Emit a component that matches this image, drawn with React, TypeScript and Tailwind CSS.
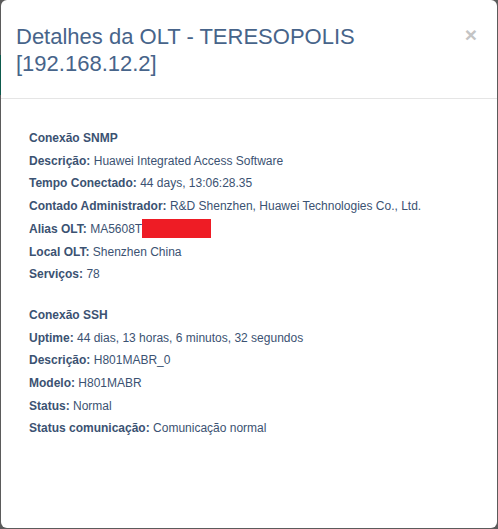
export default function App() {
  const snmp: [string, string][] = [
    ["Descrição:", "Huawei Integrated Access Software"],
    ["Tempo Conectado:", "44 days, 13:06:28.35"],
    ["Contado Administrador:", "R&D Shenzhen, Huawei Technologies Co., Ltd."],
  ];
  const snmp2: [string, string][] = [
    ["Local OLT:", "Shenzhen China"],
    ["Serviços:", "78"],
  ];
  const ssh: [string, string][] = [
    ["Uptime:", "44 dias, 13 horas, 6 minutos, 32 segundos"],
    ["Descrição:", "H801MABR_0"],
    ["Modelo:", "H801MABR"],
    ["Status:", "Normal"],
    ["Status comunicação:", "Comunicação normal"],
  ];

  return (
    <div
      className="relative h-[529px] w-[498px] overflow-hidden bg-[#5b5b5b]"
      style={{ fontFamily: "'Liberation Sans', Arial, sans-serif" }}
    >
      <div className="absolute left-0 top-[55px] h-[40px] w-[2px] bg-[#0d5a4c]" />
      <div className="absolute left-[1px] right-[1px] top-0 bottom-[1px] rounded-[6px] bg-white">
        <div className="flex items-start justify-between border-b border-[#e5e5e5] px-[15px] pt-[23px] pb-[21px]">
          <h4 className="text-[22px] leading-[27px] text-[#47648a]">
            Detalhes da OLT - TERESOPOLIS [192.168.12.2]
          </h4>
          <button className="mt-[1px] mr-[5px] text-[21px] font-bold leading-none text-[#c4c4c4]">
            ×
          </button>
        </div>
        <div className="px-[28px] pt-[28px] text-[12px] leading-[22.7px] text-[#3b5272]">
          <div className="font-bold">Conexão SNMP</div>
          {snmp.map(([k, v]) => (
            <div key={k}>
              <span className="font-bold">{k}</span> {v}
            </div>
          ))}
          <div className="relative">
            <span className="font-bold">Alias OLT:</span> MA5608T T
            <span className="absolute left-[113px] top-[1px] h-[19px] w-[69px] bg-[#ee1c25]" />
          </div>
          {snmp2.map(([k, v]) => (
            <div key={k}>
              <span className="font-bold">{k}</span> {v}
            </div>
          ))}
          <div className="mt-[18px] font-bold">Conexão SSH</div>
          {ssh.map(([k, v]) => (
            <div key={k}>
              <span className="font-bold">{k}</span> {v}
            </div>
          ))}
        </div>
      </div>
    </div>
  );
}
